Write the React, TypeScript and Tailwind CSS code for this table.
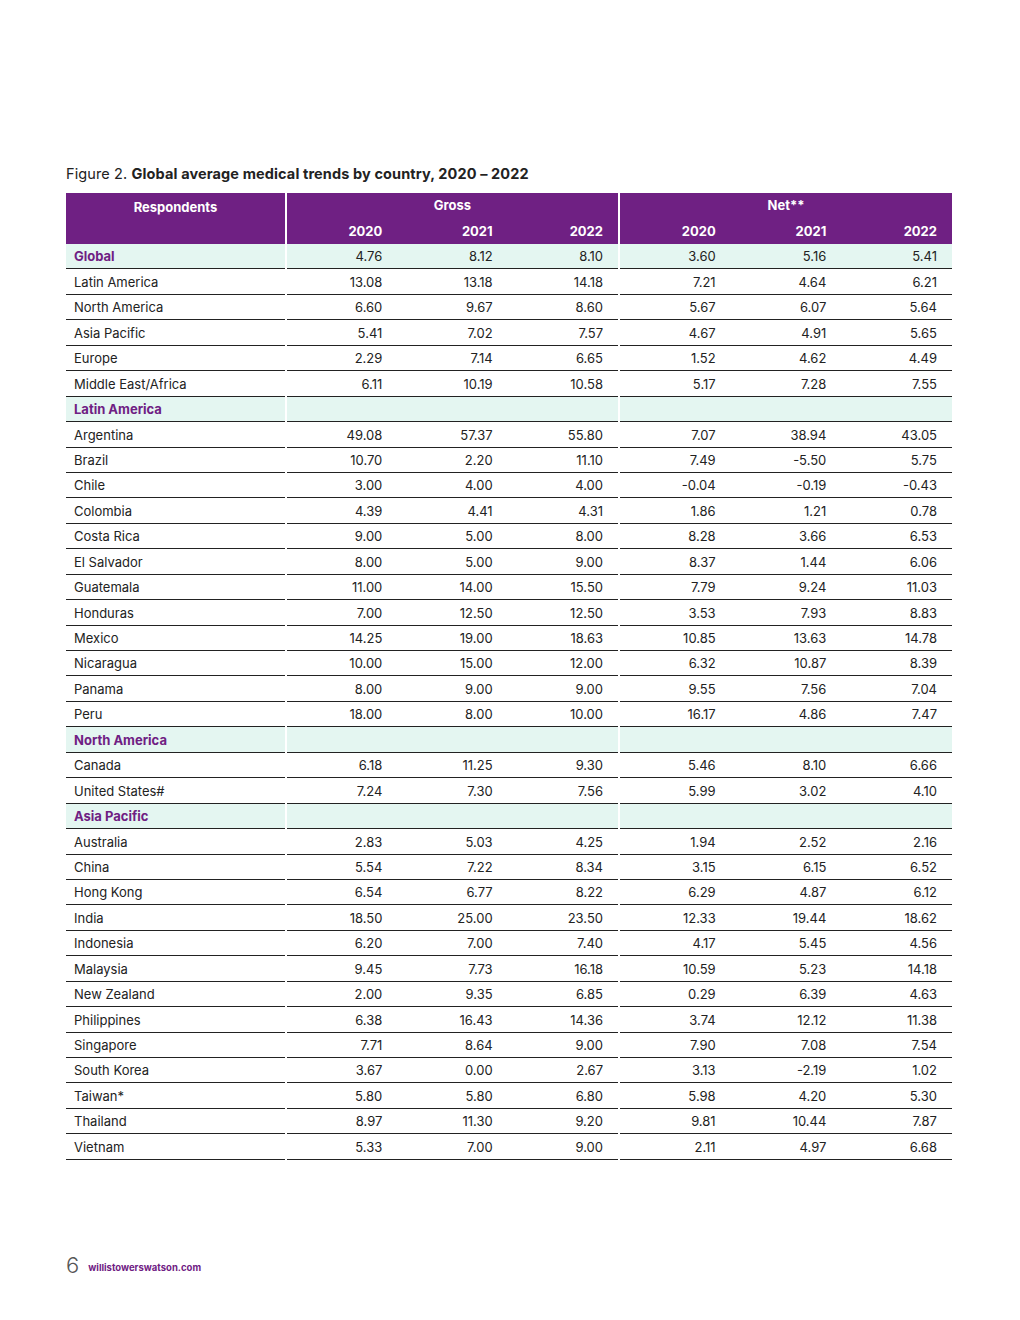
import React from "react";

type Row = { name: string; g: string[]; n: string[]; kind?: "global" | "section" };

const rows: Row[] = [
  { name: "Global", g: ["4.76", "8.12", "8.10"], n: ["3.60", "5.16", "5.41"], kind: "global" },
  { name: "Latin America", g: ["13.08", "13.18", "14.18"], n: ["7.21", "4.64", "6.21"] },
  { name: "North America", g: ["6.60", "9.67", "8.60"], n: ["5.67", "6.07", "5.64"] },
  { name: "Asia Pacific", g: ["5.41", "7.02", "7.57"], n: ["4.67", "4.91", "5.65"] },
  { name: "Europe", g: ["2.29", "7.14", "6.65"], n: ["1.52", "4.62", "4.49"] },
  { name: "Middle East/Africa", g: ["6.11", "10.19", "10.58"], n: ["5.17", "7.28", "7.55"] },
  { name: "Latin America", g: [], n: [], kind: "section" },
  { name: "Argentina", g: ["49.08", "57.37", "55.80"], n: ["7.07", "38.94", "43.05"] },
  { name: "Brazil", g: ["10.70", "2.20", "11.10"], n: ["7.49", "-5.50", "5.75"] },
  { name: "Chile", g: ["3.00", "4.00", "4.00"], n: ["-0.04", "-0.19", "-0.43"] },
  { name: "Colombia", g: ["4.39", "4.41", "4.31"], n: ["1.86", "1.21", "0.78"] },
  { name: "Costa Rica", g: ["9.00", "5.00", "8.00"], n: ["8.28", "3.66", "6.53"] },
  { name: "El Salvador", g: ["8.00", "5.00", "9.00"], n: ["8.37", "1.44", "6.06"] },
  { name: "Guatemala", g: ["11.00", "14.00", "15.50"], n: ["7.79", "9.24", "11.03"] },
  { name: "Honduras", g: ["7.00", "12.50", "12.50"], n: ["3.53", "7.93", "8.83"] },
  { name: "Mexico", g: ["14.25", "19.00", "18.63"], n: ["10.85", "13.63", "14.78"] },
  { name: "Nicaragua", g: ["10.00", "15.00", "12.00"], n: ["6.32", "10.87", "8.39"] },
  { name: "Panama", g: ["8.00", "9.00", "9.00"], n: ["9.55", "7.56", "7.04"] },
  { name: "Peru", g: ["18.00", "8.00", "10.00"], n: ["16.17", "4.86", "7.47"] },
  { name: "North America", g: [], n: [], kind: "section" },
  { name: "Canada", g: ["6.18", "11.25", "9.30"], n: ["5.46", "8.10", "6.66"] },
  { name: "United States#", g: ["7.24", "7.30", "7.56"], n: ["5.99", "3.02", "4.10"] },
  { name: "Asia Pacific", g: [], n: [], kind: "section" },
  { name: "Australia", g: ["2.83", "5.03", "4.25"], n: ["1.94", "2.52", "2.16"] },
  { name: "China", g: ["5.54", "7.22", "8.34"], n: ["3.15", "6.15", "6.52"] },
  { name: "Hong Kong", g: ["6.54", "6.77", "8.22"], n: ["6.29", "4.87", "6.12"] },
  { name: "India", g: ["18.50", "25.00", "23.50"], n: ["12.33", "19.44", "18.62"] },
  { name: "Indonesia", g: ["6.20", "7.00", "7.40"], n: ["4.17", "5.45", "4.56"] },
  { name: "Malaysia", g: ["9.45", "7.73", "16.18"], n: ["10.59", "5.23", "14.18"] },
  { name: "New Zealand", g: ["2.00", "9.35", "6.85"], n: ["0.29", "6.39", "4.63"] },
  { name: "Philippines", g: ["6.38", "16.43", "14.36"], n: ["3.74", "12.12", "11.38"] },
  { name: "Singapore", g: ["7.71", "8.64", "9.00"], n: ["7.90", "7.08", "7.54"] },
  { name: "South Korea", g: ["3.67", "0.00", "2.67"], n: ["3.13", "-2.19", "1.02"] },
  { name: "Taiwan*", g: ["5.80", "5.80", "6.80"], n: ["5.98", "4.20", "5.30"] },
  { name: "Thailand", g: ["8.97", "11.30", "9.20"], n: ["9.81", "10.44", "7.87"] },
  { name: "Vietnam", g: ["5.33", "7.00", "9.00"], n: ["2.11", "4.97", "6.68"] },
];

function Nums({ vals }: { vals: string[] }) {
  return (
    <div className="grid grid-cols-3 h-full">
      {[0, 1, 2].map((i) => (
        <div key={i} className="flex items-center justify-end pr-[15px] pt-[2px]">
          {vals[i] ?? ""}
        </div>
      ))}
    </div>
  );
}

export default function App() {
  const font = { fontFamily: "Inter, 'Liberation Sans', sans-serif" };
  return (
    <div className="w-[1020px] h-[1320px] bg-white relative text-[#222]" style={font}>
      <div className="pt-[165px] pl-[66px]">
        <div className="text-[14.5px] leading-[18px] tracking-[0.008em] text-[#222]">
          Figure 2. <span className="font-bold">Global average medical trends by country, 2020 – 2022</span>
        </div>
        <div className="mt-[10px] w-[886px] text-[13px]">
          {/* header */}
          <div className="grid grid-cols-[219px_331px_332px] gap-x-[2px] text-white font-bold">
            <div className="bg-[#6f2083] h-[51px] flex justify-center pt-[5px]">Respondents</div>
            <div className="bg-[#6f2083] h-[51px] flex flex-col">
              <div className="h-[25px] flex items-center justify-center pt-[1px]">Gross</div>
              <div className="h-[26px]">
                <Nums vals={["2020", "2021", "2022"]} />
              </div>
            </div>
            <div className="bg-[#6f2083] h-[51px] flex flex-col">
              <div className="h-[25px] flex items-center justify-center pt-[1px]">Net**</div>
              <div className="h-[26px]">
                <Nums vals={["2020", "2021", "2022"]} />
              </div>
            </div>
          </div>
          {rows.map((r, idx) => {
            const bg = r.kind ? "bg-[#e4f6f1]" : "bg-white";
            const nameCls = r.kind ? "text-[#6f2083] font-bold" : "";
            return (
              <div key={idx} className="grid grid-cols-[219px_331px_332px] gap-x-[2px] h-[25.45px]">
                <div className={`${bg} border-b border-[#222] flex items-center pl-2 pt-[2px] ${nameCls}`}>{r.name}</div>
                <div className={`${bg} border-b border-[#222]`}>
                  <Nums vals={r.g} />
                </div>
                <div className={`${bg} border-b border-[#222]`}>
                  <Nums vals={r.n} />
                </div>
              </div>
            );
          })}
        </div>
      </div>
      <div className="absolute left-[66px] top-[1253px] flex items-end gap-[9px]">
        <span className="text-[22px] leading-[24px] font-light text-[#555]">6</span>
        <span className="text-[9.5px] font-bold text-[#6f2083] pb-[2px]">willistowerswatson.com</span>
      </div>
    </div>
  );
}
